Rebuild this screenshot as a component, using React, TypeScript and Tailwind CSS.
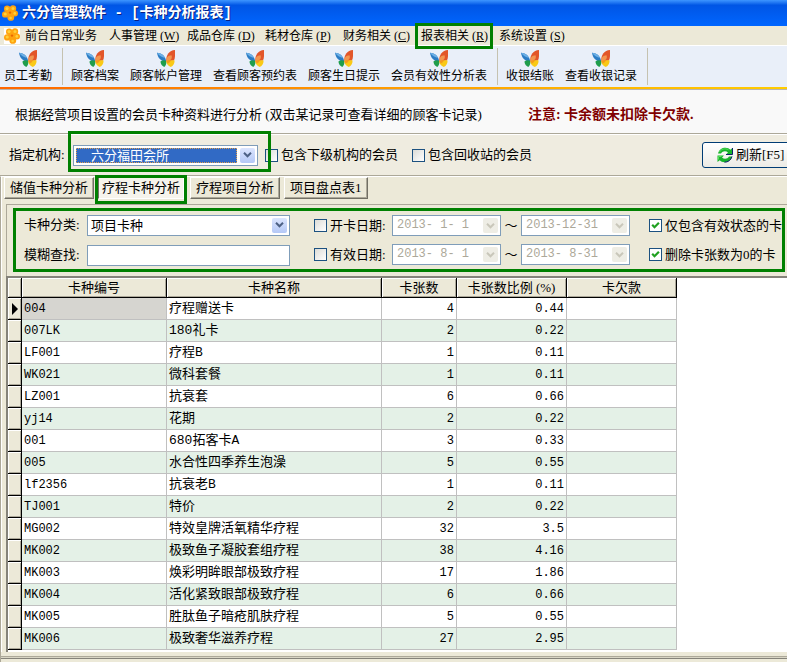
import React from "react";

const menus: [string, string][] = [
  ["人事管理", "W"],
  ["成品仓库", "D"],
  ["耗材仓库", "P"],
  ["财务相关", "C"],
  ["报表相关", "R"],
  ["系统设置", "S"],
];

const toolGroups = [
  ["员工考勤"],
  ["顾客档案", "顾客帐户管理", "查看顾客预约表", "顾客生日提示", "会员有效性分析表"],
  ["收银结账", "查看收银记录"],
];

const tabs = ["储值卡种分析", "疗程卡种分析", "疗程项目分析", "项目盘点表1"];

const rows = [
  ["004", "疗程赠送卡", "4", "0.44"],
  ["007LK", "180礼卡", "2", "0.22"],
  ["LF001", "疗程B", "1", "0.11"],
  ["WK021", "微科套餐", "1", "0.11"],
  ["LZ001", "抗衰套", "6", "0.66"],
  ["yj14", "花期", "2", "0.22"],
  ["001", "680拓客卡A", "3", "0.33"],
  ["005", "水合性四季养生泡澡", "5", "0.55"],
  ["lf2356", "抗衰老B", "1", "0.11"],
  ["TJ001", "特价", "2", "0.22"],
  ["MG002", "特效皇牌活氧精华疗程", "32", "3.5"],
  ["MK002", "极致鱼子凝胶套组疗程", "38", "4.16"],
  ["MK003", "焕彩明眸眼部极致疗程", "17", "1.86"],
  ["MK004", "活化紧致眼部极致疗程", "6", "0.66"],
  ["MK005", "胜肽鱼子暗疮肌肤疗程", "5", "0.55"],
  ["MK006", "极致奢华滋养疗程", "27", "2.95"],
];

function Flower() {
  return (
    <svg viewBox="0 0 16 16" className="size-4 shrink-0" aria-hidden="true">
      <g fill="#ffa30f">
        <circle cx="5.2" cy="3.8" r="3.2" />
        <circle cx="11" cy="3.4" r="3.200" />
        <circle cx="13" cy="8.6" r="3" />
        <circle cx="8.8" cy="12.4" r="3.400" />
        <circle cx="3.2" cy="9.4" r="3.200" />
        <circle cx="8" cy="8" r="3.8" />
      </g>
      <g fill="#ffd038">
        <circle cx="5" cy="3.6" r="1.6" />
        <circle cx="11" cy="3.4" r="1.5" />
        <circle cx="3.2" cy="9" r="1.6" />
        <circle cx="12.8" cy="8.4" r="1.4" />
        <circle cx="8.6" cy="13" r="1.3" />
      </g>
      <circle cx="8" cy="7.6" r="1.2" fill="#e86800" />
    </svg>
  );
}

function Butterfly() {
  return (
    <svg viewBox="0 0 18 17" className="h-[17px] w-[18px]" aria-hidden="true">
      <path d="M0 2.800C4 2.800 8.300 5.500 9.200 11.200 5 12 1 9 0 2.800Z" fill="#2b7cc4" />
      <path d="M0 2.800C3.500 3 6.500 4.800 8 8 5 7.200 2 6 0 2.800Z" fill="#6db0e6" />
      <path d="M3.400 11.600C5.500 10 7.800 10 9.400 11c.3 2.400-.6 4.800-2.200 6-2-.8-3.600-2.800-3.800-5.400Z" fill="#1f9d4c" />
      <path d="M18 0c.2 4 .2 8-1 10.400L9.400 11.600C8.600 6 11.500.6 18 0Z" fill="#e2562a" />
      <path d="M9.300 11.200C8.800 8 11 5.200 14.500 5.200c1.300 3.200-1 5.800-5.200 6Z" fill="#f29650" />
      <path d="M9.200 11.300c3-.9 6-1.200 8.400-.8 0 3-1.400 5.600-3.800 6.500-2.600-1-4.300-3-4.600-5.700Z" fill="#f9c916" />
      <path d="M9.300 11.300c1.700-1 3-1.300 4.500-1.300-.3 1.800-1.500 3.200-3 3.600Z" fill="#f59a1c" />
    </svg>
  );
}

function RefreshIcon() {
  return (
    <svg viewBox="0 0 16 16" className="size-4 shrink-0" aria-hidden="true">
      <path d="M1 6.500C2 2.800 5 .8 8.500.8c2 0 3.700.8 4.800 2L15.500 1v6.500H9l2-2C9 3.600 5.500 3.800 4 6.500Z" fill="#17b32b" />
      <path d="M15 9.500c-1 3.700-4 5.700-7.500 5.700-2 0-3.700-.8-4.800-2L.5 15V8.500H7l-2 2c2 1.900 5.500 1.700 7-1Z" fill="#17b32b" />
      <path d="M15.500 1v6.500H9M15 9.500c-1 3.700-4 5.700-7.500 5.700" fill="none" stroke="#10206a" strokeWidth="1" />
      <path d="M2.500 5C4 2.200 8 .8 11.500 2.800M1.500 12.500v-3h3" fill="none" stroke="#58e05c" strokeWidth="1" />
    </svg>
  );
}

function Arrow({ disabled = false }: { disabled?: boolean }) {
  return (
    <span
      className={
        "pointer-events-none flex w-[15px] shrink-0 items-center justify-center rounded-[2px] " +
        (disabled ? "bg-[#eeede5] text-[#c9c7ba]" : "bg-linear-to-b from-[#dbe5fe] to-[#b4c8f6] text-[#4d6185]")
      }
    >
      <svg viewBox="0 0 9 6" className="h-[6px] w-[9px]" aria-hidden="true">
        <path d="M1 .8 4.500 4.300 8 .8" fill="none" stroke="currentColor" strokeWidth="2" />
      </svg>
    </span>
  );
}

function Check({ label, checked = false }: { label: string; checked?: boolean }) {
  return (
    <label className="flex shrink-0 items-center gap-[3px] whitespace-nowrap">
      <span className="grid size-[13px] shrink-0">
        <input
          type="checkbox"
          defaultChecked={checked}
          className="peer col-start-1 row-start-1 size-[13px] appearance-none border border-[#1c5180] bg-linear-to-br from-[#dcdcd7] to-white checked:bg-white checked:bg-none"
        />
        <svg
          viewBox="0 0 13 13"
          className="pointer-events-none invisible col-start-1 row-start-1 size-[13px] peer-checked:visible"
          aria-hidden="true"
        >
          <path d="M3.200 5.800 5.500 8.200 9.900 3.800" fill="none" stroke="#21a121" strokeWidth="2.200" />
        </svg>
      </span>
      {label}
    </label>
  );
}

function DateBox({ value, name }: { value: string; name: string }) {
  return (
    <span className="flex h-[21px] w-[109px] shrink-0 border border-[#7f9db9] bg-white p-[2px]">
      <input
        disabled
        aria-label={name}
        defaultValue={value}
        className="w-0 min-w-0 flex-1 pl-[2px] font-['Liberation_Mono',monospace] text-xs leading-[15px] text-[#aca899]"
      />
      <Arrow disabled />
    </span>
  );
}

function DateRange({ label, from, to }: { label: string; from: string; to: string }) {
  return (
    <div className="flex h-[21px] items-center">
      <div className="w-[78px] shrink-0">
        <Check label={label} />
      </div>
      <DateBox value={from} name={label + "起"} />
      <span className="w-5 shrink-0 text-center">～</span>
      <DateBox value={to} name={label + "止"} />
    </div>
  );
}

const mark = "pointer-events-none absolute border-[3px] border-[#008000]";
const raised =
  "px-[5px] border border-t-white border-l-white border-r-[#716f64] border-b-[#716f64] shadow-[inset_-1px_-1px_0_#aca899]";
const head =
  "h-5 border-r border-b border-black bg-[#ece9d8] p-0 text-center font-normal shadow-[inset_1px_1px_0_#fff,inset_-1px_-1px_0_#aca899]";
const mono = "font-['Liberation_Mono','Noto_Sans_CJK_SC',monospace]";

export default function App() {
  return (
    <div className="flex min-h-screen flex-col overflow-hidden bg-[#ece9d8] font-['Liberation_Serif','Noto_Sans_CJK_SC',sans-serif] text-[13px] leading-4 text-black">
      <header
        className={
          "flex h-[26px] shrink-0 items-center gap-1 bg-linear-to-b from-[#3d95ff] via-[#0055e5] via-20% to-[#0066ff] pl-[2px] text-sm leading-4 font-bold text-white [text-shadow:1px_1px_0_#0a1f80] " +
          mono
        }
      >
        <Flower />
        <h1 className="whitespace-nowrap">六分管理软件 - [卡种分析报表]</h1>
      </header>

      <nav className="flex h-5 shrink-0 items-center gap-3 border-b border-white pl-1 text-xs leading-4 whitespace-nowrap">
        <div className="flex items-center gap-[5px]">
          <span className="bg-white">
            <Flower />
          </span>
          <button type="button" className="w-[72px] text-left">前台日常业务</button>
        </div>
        {menus.map(([name, key]) => (
          <button key={name} type="button" className="relative w-[66px] shrink-0 text-left">
            {name} (<u>{key}</u>)
            {key === "R" && <span className={mark + " -inset-x-[6px] -inset-y-[5px]"} />}
          </button>
        ))}
      </nav>

      <div className="flex h-[41px] shrink-0 bg-[#e9eff9] py-[2px] text-xs leading-4 whitespace-nowrap">
        {toolGroups.map((group, i) => (
          <div
            key={group[0]}
            className={"flex gap-[11px] border-r border-[#c5c2b0] pr-[10px] " + (i === 0 ? "pl-1" : "pl-2")}
          >
            {group.map((t) => (
              <button key={t} type="button" className="flex flex-col items-center gap-px pt-[2px]">
                <Butterfly />
                <span>{t}</span>
              </button>
            ))}
          </div>
        ))}
      </div>
      <div className="h-[3px] shrink-0 border-b border-[#b8b5b0] bg-linear-to-r from-[#ff6600] to-[#ffcc00]" />

      <div className="flex h-11 shrink-0 items-center gap-[46px] border-b border-[#aca899] bg-[#f9f9f9] pt-[7px] pl-[15px] whitespace-nowrap">
        <p>根据经营项目设置的会员卡种资料进行分析 (双击某记录可查看详细的顾客卡记录)</p>
        <strong className="text-sm leading-4 text-[#800000]">注意: 卡余额未扣除卡欠款.</strong>
      </div>

      <div className="flex h-[42px] shrink-0 items-center border-t border-b border-t-white border-b-[#aca899] bg-[#efece0] pl-[9px]">
        <label htmlFor="org" className="w-16 shrink-0">指定机构:</label>
        <div className="relative z-10 flex h-[21px] w-[185px] shrink-0 border border-[#7f9db9] bg-white p-[2px]">
          <select
            id="org"
            className="mr-[3px] min-w-0 flex-1 appearance-none border border-dotted border-[#e0a050] bg-[#316ac5] pl-[14px] leading-[13px] text-white"
          >
            <option>六分福田会所</option>
          </select>
          <Arrow />
          <span className={mark + " -top-[15px] -right-[14px] -bottom-[7px] -left-[6px]"} />
        </div>
        <div className="ml-[7px] flex gap-[14px]">
          <Check label="包含下级机构的会员" />
          <Check label="包含回收站的会员" />
        </div>
        <button
          type="button"
          className="ml-[170px] flex h-[26px] w-[102px] shrink-0 items-center gap-[3px] rounded-[3px] border border-[#003c74] bg-linear-to-b from-white to-[#ecebe5] pl-[14px] whitespace-nowrap"
        >
          <RefreshIcon />
          刷新[F5]
        </button>
      </div>

      <main className="flex flex-1 flex-col border-t border-l border-t-white border-l-[#aca899]">
        <div className="flex flex-1 flex-col border-l border-white">
          <div role="tablist" className="flex h-[27px] shrink-0 items-start gap-1 pl-[2px] whitespace-nowrap">
            {tabs.map((t, i) => (
              <button
                key={t}
                type="button"
                role="tab"
                aria-selected={i === 1}
                className={
                  "relative h-[22px] " +
                  (i === 1
                    ? "mr-[2px] border border-t-[#716f64] border-r-white border-b-white border-l-[#716f64] bg-[#f6f4ec] px-[3px]"
                    : raised)
                }
              >
                {t}
                {i === 1 && <span className={mark + " -inset-x-1 -top-[3px] -bottom-[6px]"} />}
              </button>
            ))}
          </div>

          <div className="ml-1 border-t border-l border-[#aca899] pt-[3px] pr-[2px] pb-1 pl-[6px]">
            <div className="flex h-16 items-center border-[3px] border-[#008000] pl-2">
              <div className="grid shrink-0 grid-cols-[63px_203px] items-center gap-y-[9px]">
                <label htmlFor="kind">卡种分类:</label>
                <div className="flex h-[21px] border border-[#7f9db9] bg-white p-[2px]">
                  <select id="kind" className="min-w-0 flex-1 appearance-none pl-px leading-[15px]">
                    <option>项目卡种</option>
                  </select>
                  <Arrow />
                </div>
                <label htmlFor="search">模糊查找:</label>
                <input id="search" className="h-[21px] min-w-0 border border-[#7f9db9] bg-white px-1" />
              </div>
              <div className="ml-6 flex shrink-0 flex-col gap-2">
                <DateRange label="开卡日期:" from="2013- 1- 1" to="2013-12-31" />
                <DateRange label="有效日期:" from="2013- 8- 1" to="2013- 8-31" />
              </div>
              <div className="ml-[19px] flex flex-col gap-[13px]">
                <Check label="仅包含有效状态的卡" checked />
                <Check label="删除卡张数为0的卡" checked />
              </div>
            </div>
          </div>

          <div className="ml-1 flex-1 border-t-2 border-l-2 border-[#85837a] bg-white">
            <table className="w-[669px] table-fixed border-separate border-spacing-0">
              <colgroup>
                <col className="w-[14px]" />
                <col className="w-[145px]" />
                <col className="w-[215px]" />
                <col className="w-[75px]" />
                <col className="w-[110px]" />
                <col className="w-[110px]" />
              </colgroup>
              <thead>
                <tr>
                  <th className={head} />
                  <th className={head}>卡种编号</th>
                  <th className={head}>卡种名称</th>
                  <th className={head}>卡张数</th>
                  <th className={head}>卡张数比例 (%)</th>
                  <th className={head}>卡欠款</th>
                </tr>
              </thead>
              <tbody>
                {rows.map(([code, name, count, ratio], i) => {
                  const cell = "h-[22px] border-r border-b border-[#c0c0c0] px-[2px] py-0 whitespace-nowrap " + mono;
                  return (
                    <tr key={code} className={i % 2 ? "bg-[#e4f1e7]" : "bg-white"}>
                      <td className="h-[22px] border-r border-b border-black bg-[#ece9d8] p-0 shadow-[inset_1px_1px_0_#fff,inset_-1px_-1px_0_#aca899]">
                        {i === 0 && (
                          <svg viewBox="0 0 6 12" className="ml-1 h-3 w-[6px]" aria-hidden="true">
                            <path d="M0 0 6 6 0 12Z" />
                          </svg>
                        )}
                      </td>
                      <td className={cell + " text-xs" + (i === 0 ? " bg-[#d6d5d0]" : "")}>{code}</td>
                      <td className={cell}>{name}</td>
                      <td className={cell + " text-right text-xs"}>{count}</td>
                      <td className={cell + " text-right text-xs"}>{ratio}</td>
                      <td className={cell} />
                    </tr>
                  );
                })}
              </tbody>
            </table>
          </div>
        </div>
      </main>
      <footer className="h-[10px] shrink-0 border-l border-[#aca899]">
        <div className="mt-1 h-[3px] border-t border-b border-t-[#aca899] border-b-[#85837a] bg-[#d8d5c4]" />
      </footer>
    </div>
  );
}
